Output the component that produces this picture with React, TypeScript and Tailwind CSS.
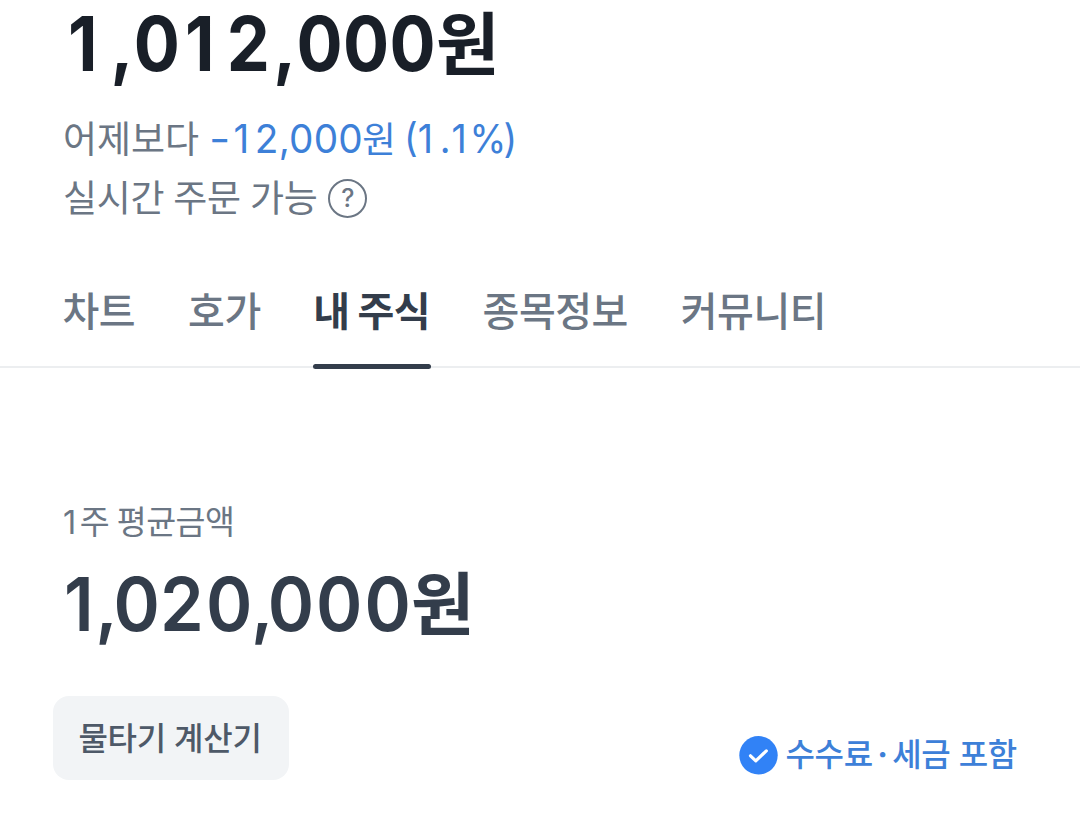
const tabs = [
  { label: "차트", active: false },
  { label: "호가", active: false },
  { label: "내 주식", active: true },
  { label: "종목정보", active: false },
  { label: "커뮤니티", active: false },
];

function Price() {
  return (
    <section className="flex h-[232px] flex-col pl-[63px]">
      <h1 className="flex h-[101px] items-baseline whitespace-nowrap pl-[5px] font-bold text-[#191f28]">
        <span className="w-[368px] leading-[86px]">
          <span className="inline-block origin-left scale-x-90 text-[76px] leading-[86px] tracking-[0.4px]">
            <span className="pr-[14px]">1</span>,<span className="inline-block">0</span>
            <span className="pl-[5.5px] pr-[13px]">1</span>2<span className="pl-[3.5px]">,</span>
            <span className="inline-block">000</span>
          </span>
        </span>
        <span className="-translate-y-[1px] text-[69px] leading-[80px]">원</span>
      </h1>
      <p className="flex h-[67px] items-baseline whitespace-nowrap leading-[76px]">
        <span className="text-[37px] text-[#6b7684]">어제보다</span>
        <span className="ml-[10px] w-[153px] text-[#3d80d8]">
          <span className="inline-block origin-left scale-x-[0.98] text-[39.5px] tracking-[0.2px]">
            <span className="inline-block w-[24px] origin-left scale-x-[1.2]">-</span><span className="pl-[1px] pr-[5.5px]">1</span>2,000
          </span>
        </span>
        <span className="text-[36.5px] text-[#3d80d8]">원</span>
        <span className="ml-[8px] inline-block origin-left scale-x-[0.95] text-[39.5px] text-[#3d80d8]">
          (<span className="pr-[7px]">1</span>.<span className="pl-[1px] pr-[3px]">1</span>%<span className="-ml-[3px]">)</span>
        </span>
      </p>
      <p className="flex h-[60px] items-center whitespace-nowrap text-[37px] tracking-[-0.3px] text-[#6b7684]">
        <span className="pt-[2px] leading-[60px] [word-spacing:-1px]">실시간 주문 가능</span>
        <span className="ml-[11px] mt-[1px] flex size-[39px] items-center justify-center rounded-full border-[2.5px] border-[#6b7684] text-[25px] font-medium leading-none tracking-normal">?</span>
      </p>
    </section>
  );
}

function Tabs() {
  return (
    <nav className="h-[136px] border-b-2 border-[#eceef0] pl-[62.5px]">
      <ul className="flex gap-[53px] whitespace-nowrap">
        {tabs.map((tab) => (
          <li
            key={tab.label}
            className={
              tab.active
                ? "-mx-[0.5px] flex h-[137px] flex-col justify-between text-[40px] font-bold leading-none tracking-[-0.5px] text-[#333d4b] [word-spacing:-1px]"
                : "flex h-[137px] flex-col text-[40px] font-medium leading-none tracking-[-0.5px] text-[#6b7684]"
            }
          >
            <span className="pt-[60px]">{tab.label}</span>
            {tab.active && <span className="-mx-[0.5px] h-[5px] rounded-full bg-[#333d4b]" />}
          </li>
        ))}
      </ul>
    </nav>
  );
}

function Holding() {
  return (
    <section className="pt-[132px]">
      <p className="flex h-[43px] items-baseline whitespace-nowrap pl-[63px] text-[32.5px] leading-[45px] tracking-[-0.5px] text-[#6b7684]">
        <span className="pr-[4px]">1</span>
        <span className="[word-spacing:-1px]">주 평균금액</span>
      </p>
      <p className="flex h-[153px] items-baseline whitespace-nowrap pl-[64px] text-[#333d4b]">
        <span className="w-[347px] leading-[122px]">
          <span className="inline-block origin-left scale-x-95 text-[74px] font-semibold leading-[122px]">
            <span className="pr-[1.7px]">1</span>
            <span className="-mr-[4.4px]">,</span>02<span className="pl-[2.3px]">0</span><span className="-ml-[1.5px] -mr-[6px]">,</span>
            <span className="tracking-[2.1px]">000</span>
          </span>
        </span>
        <span className="-translate-y-[1px] text-[69px] font-bold leading-[100px]">원</span>
      </p>
      <div className="flex justify-between pl-[53px] pr-[63px]">
        <button className="h-[84px] w-[236px] whitespace-nowrap rounded-[16px] bg-[#f2f4f6] pr-[2px] pt-[2px] text-[32px] font-medium tracking-[-0.3px] text-[#4e5968]">
          물타기 계산기
        </button>
        <p className="mt-[39px] flex h-[40px] items-center whitespace-nowrap text-[32px] font-medium leading-none tracking-[-0.3px] text-[#3d80d8]">
          <svg className="mr-[7px] size-[39px]" viewBox="0 0 39 39" fill="none">
            <circle cx="19.5" cy="19.3" r="19.2" fill="#3182f6" />
            <path d="M11.5 19.8 16.8 24.8 27.3 14.9" stroke="white" strokeWidth="3.2" strokeLinecap="round" strokeLinejoin="round" />
          </svg>
          <span>수수료</span>
          <span className="mx-[4.5px] font-bold">·</span>
          <span>세금 포함</span>
        </p>
      </div>
    </section>
  );
}

export default function App() {
  return (
    <main className="h-[837px] w-full overflow-hidden bg-white font-['Inter','Noto_Sans_CJK_KR',sans-serif]">
      <Price />
      <Tabs />
      <Holding />
    </main>
  );
}
